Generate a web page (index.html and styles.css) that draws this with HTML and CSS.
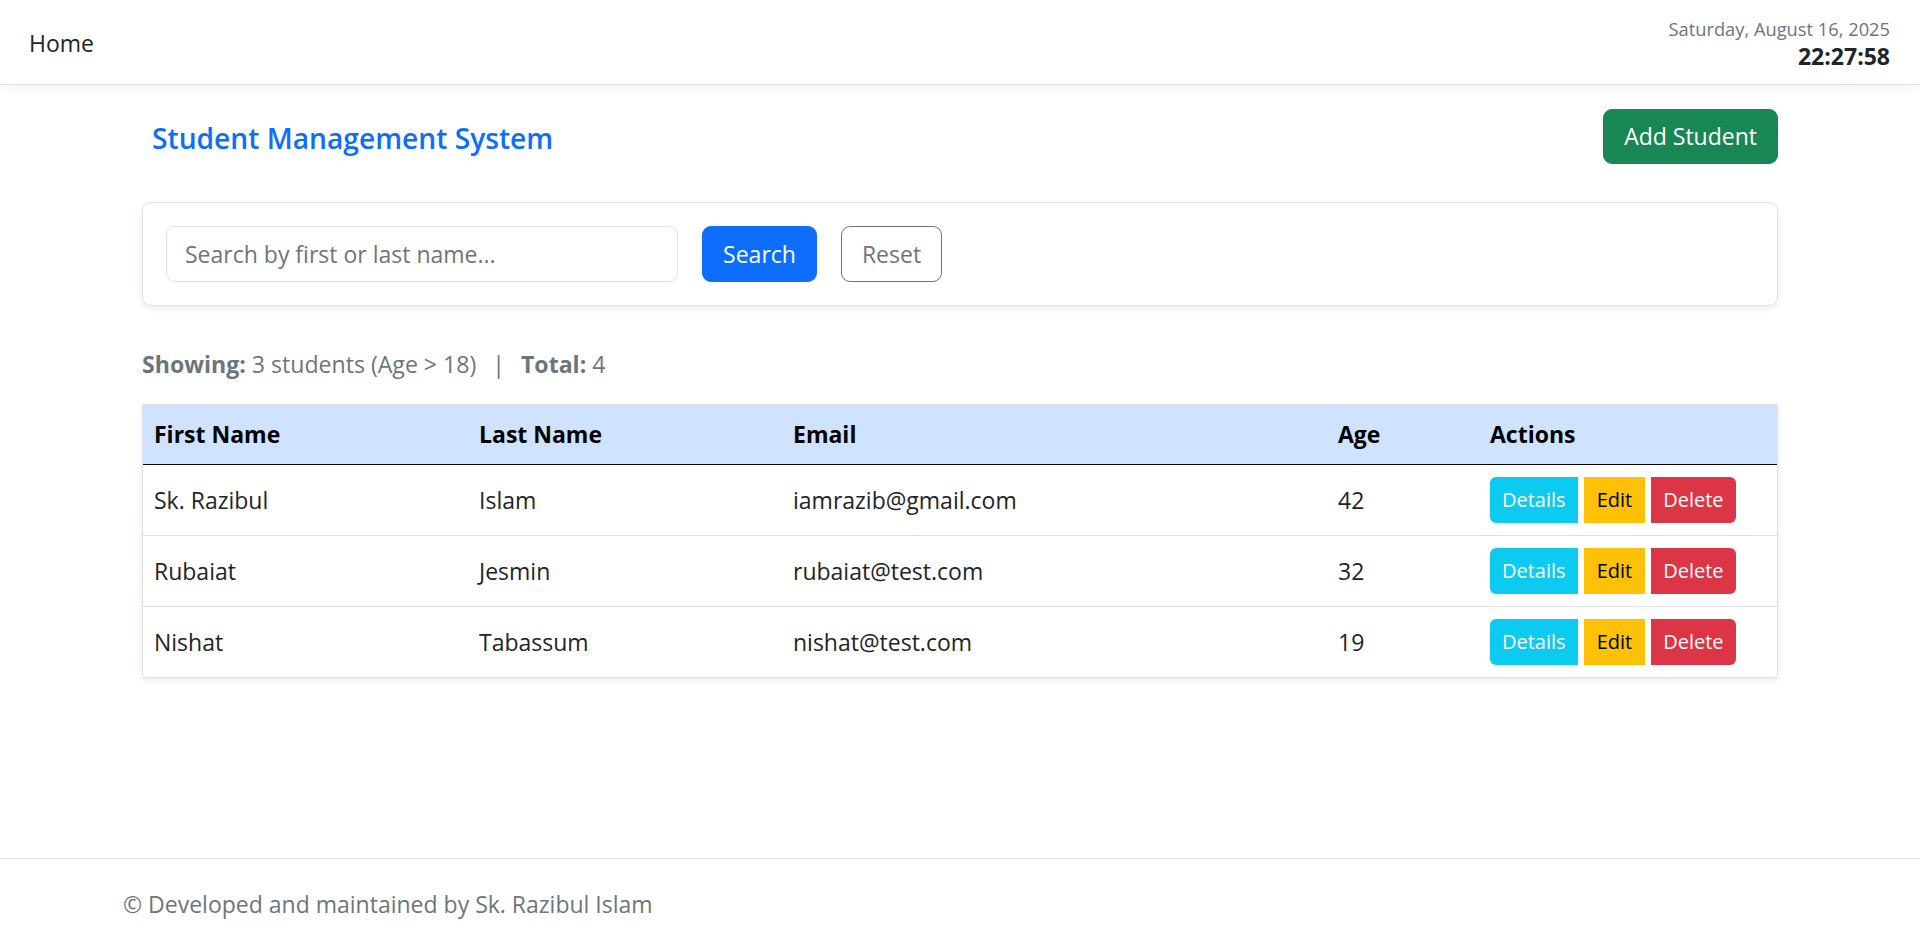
FILE: index.html
```html
<!DOCTYPE html>
<html lang="en">
<head>
<meta charset="utf-8">
<title>Student Management System</title>
<link rel="stylesheet" href="styles.css">
</head>
<body>
<nav class="topbar">
  <a class="brand" href="#">Home</a>
  <div class="clock">
    <div class="clock-date">Saturday, August 16, 2025</div>
    <div class="clock-time">22:27:58</div>
  </div>
</nav>

<main class="page">
  <div class="page-head">
    <h1 class="page-title">Student Management System</h1>
    <button class="btn btn-success">Add Student</button>
  </div>

  <div class="search-card">
    <input class="search-input" type="text" placeholder="Search by first or last name...">
    <button class="btn btn-primary">Search</button>
    <button class="btn btn-outline">Reset</button>
  </div>

  <p class="summary"><strong>Showing:</strong> 3 students (Age &gt; 18) <span class="sep">|</span> <strong>Total:</strong> 4</p>

  <div class="table-wrap">
    <table class="students">
      <colgroup>
        <col class="c-first"><col class="c-last"><col class="c-email"><col class="c-age"><col class="c-actions">
      </colgroup>
      <thead>
        <tr><th>First Name</th><th>Last Name</th><th>Email</th><th>Age</th><th>Actions</th></tr>
      </thead>
      <tbody>
        <tr>
          <td>Sk. Razibul</td><td>Islam</td><td>iamrazib@gmail.com</td><td>42</td>
          <td><div class="actions"><button class="act act-info">Details</button><button class="act act-warn">Edit</button><button class="act act-danger">Delete</button></div></td>
        </tr>
        <tr>
          <td>Rubaiat</td><td>Jesmin</td><td>rubaiat@test.com</td><td>32</td>
          <td><div class="actions"><button class="act act-info">Details</button><button class="act act-warn">Edit</button><button class="act act-danger">Delete</button></div></td>
        </tr>
        <tr>
          <td>Nishat</td><td>Tabassum</td><td>nishat@test.com</td><td>19</td>
          <td><div class="actions"><button class="act act-info">Details</button><button class="act act-warn">Edit</button><button class="act act-danger">Delete</button></div></td>
        </tr>
      </tbody>
    </table>
  </div>
</main>

<footer class="footer">
  <div class="footer-inner">© Developed and maintained by Sk. Razibul Islam</div>
</footer>
</body>
</html>
```

FILE: styles.css
```css
* { box-sizing: border-box; }

html, body { height: 100%; }

body {
  margin: 0;
  min-height: 100vh;
  display: flex;
  flex-direction: column;
  font-family: "Open Sans", "Noto Sans", sans-serif;
  font-size: 23px;
  line-height: 1.5;
  color: #212529;
  background: #fff;
}

/* top bar */
.topbar {
  flex: none;
  height: 85px;
  display: flex;
  align-items: center;
  justify-content: space-between;
  padding: 0 30px 2px 29px;
  border-bottom: 1px solid #dee2e6;
  box-shadow: 0 4px 12px rgba(0, 0, 0, 0.05);
  background: #fff;
}

.brand {
  font-size: 23px;
  padding-top: 4px;
  color: #212529;
  text-decoration: none;
}

.clock { text-align: right; padding-top: 2px; }

.clock-date {
  font-size: 18.3px;
  line-height: 27px;
  color: #6c757d;
}

.clock-time {
  font-size: 23px;
  line-height: 28px;
  font-weight: 700;
  color: #212529;
}

/* page */
.page {
  width: 1636px;
  margin: 0 auto;
  padding-top: 24px;
}

.page-head {
  display: flex;
  align-items: center;
  justify-content: space-between;
  margin-bottom: 38px;
}

.page-title {
  margin: 0 0 0 10px;
  padding-top: 4px;
  font-size: 28.2px;
  font-weight: 600;
  line-height: 1.2;
  color: #0d6efd;
}

.btn {
  font-family: inherit;
  font-size: 23px;
  line-height: 1;
  height: 56px;
  padding: 0 18px;
  border: 1px solid transparent;
  border-radius: 9px;
  cursor: pointer;
}

.btn-success { background: #198754; border-color: #198754; color: #fff; height: 55px; padding: 0 20px; }
.btn-primary { background: #0d6efd; border-color: #0d6efd; color: #fff; min-width: 115px; }
.btn-outline { background: #fff; border-color: #6c757d; color: #6c757d; min-width: 101px; }

/* search card */
.search-card {
  display: flex;
  gap: 24px;
  padding: 23px;
  border: 1px solid #dee2e6;
  border-radius: 9px;
  box-shadow: 0 3px 6px rgba(0, 0, 0, 0.075);
}

.search-input {
  width: 512px;
  height: 56px;
  padding: 0 18px;
  font-family: inherit;
  font-size: 23px;
  color: #212529;
  border: 1px solid #dee2e6;
  border-radius: 9px;
  outline: none;
}

.search-input::placeholder { color: #6c757d; opacity: 1; }

/* summary */
.summary {
  margin: 40px 0 22px;
  font-size: 23.1px;
  line-height: 36px;
  color: #6c757d;
}

.summary strong { font-weight: 700; }

.sep { margin: 0 10px; }

/* table */
.table-wrap {
  border: 1px solid #dee2e6;
  box-shadow: 0 3px 6px rgba(0, 0, 0, 0.075);
}

.students {
  width: 100%;
  border-collapse: collapse;
  table-layout: fixed;
}

.c-first { width: 325px; }
.c-last { width: 314px; }
.c-email { width: 545px; }
.c-age { width: 152px; }

.students th {
  background: #cfe2ff;
  color: #000;
  font-weight: 700;
  text-align: left;
  padding: 12px 11px;
  line-height: 35px;
  border-bottom: 1px solid #000;
}

.students td {
  padding: 12px 11px;
  vertical-align: middle;
  line-height: 36px;
  border-bottom: 1px solid #dee2e6;
}

.students tbody tr:last-child td { border-bottom: none; }

.actions { display: flex; gap: 6px; }

.act {
  height: 46px;
  padding: 0 12px;
  font-family: inherit;
  font-size: 20px;
  line-height: 1;
  border: none;
  border-radius: 0;
  cursor: pointer;
}

.act-info { background: #0dcaf0; color: #fff; border-radius: 6px 0 0 6px; }
.act-warn { background: #ffc107; color: #000; padding: 0 13px; }
.act-danger { background: #dc3545; color: #fff; border-radius: 0 6px 6px 0; }

/* footer */
.footer {
  margin-top: auto;
  border-top: 1px solid #dee2e6;
  padding: 27px 0 24px;
  background: #fff;
}

.footer-inner {
  padding-left: 123px;
  line-height: 36px;
  color: #6c757d;
}
```
